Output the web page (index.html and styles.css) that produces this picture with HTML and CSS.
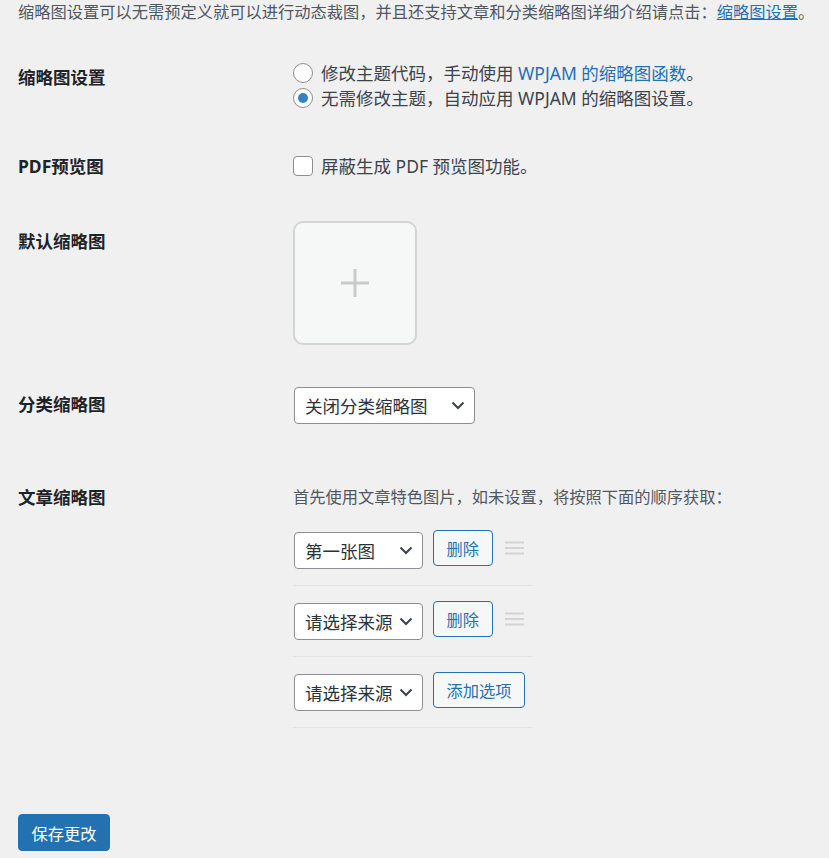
FILE: index.html
```html
<!DOCTYPE html>
<html lang="zh-CN">
<head>
  <meta charset="UTF-8" />
  <meta name="viewport" content="width=device-width, initial-scale=1.0"/>
  <title>缩略图设置</title>
  <link rel="stylesheet" href="styles.css">
</head>
<body>
  <div class="wrap">
    <p class="intro">缩略图设置可以无需预定义就可以进行动态裁图，并且还支持文章和分类缩略图详细介绍请点击：<a href="#" class="underline">缩略图设置</a>。</p>

    <div class="form-table">
      <div class="row row-thumb">
        <div class="row-label">缩略图设置</div>
        <div class="row-field">
          <label class="choice"><input type="radio" name="mode"><span>修改主题代码，手动使用 <a href="#">WPJAM 的缩略图函数</a>。</span></label>
          <label class="choice"><input type="radio" name="mode" checked><span>无需修改主题，自动应用 WPJAM 的缩略图设置。</span></label>
        </div>
      </div>

      <div class="row row-pdf">
        <div class="row-label">PDF预览图</div>
        <div class="row-field">
          <label class="choice"><input type="checkbox"><span>屏蔽生成 PDF 预览图功能。</span></label>
        </div>
      </div>

      <div class="row row-default">
        <div class="row-label">默认缩略图</div>
        <div class="row-field">
          <div class="upload-box">
            <svg width="30" height="30" viewBox="0 0 30 30"><path d="M15 1v28M1 15h28" stroke="#c9cacc" stroke-width="3"/></svg>
          </div>
        </div>
      </div>

      <div class="row row-term">
        <div class="row-label">分类缩略图</div>
        <div class="row-field">
          <span class="select-wrap">
            <select class="select-wide"><option>关闭分类缩略图</option></select>
            <svg class="chevron" width="14" height="9" viewBox="0 0 14 9"><path d="M1.5 1.5l5.5 5.5 5.5-5.5" fill="none" stroke="#3c434a" stroke-width="2"/></svg>
          </span>
        </div>
      </div>

      <div class="row row-post">
        <div class="row-label">文章缩略图</div>
        <div class="row-field">
          <p class="description">首先使用文章特色图片，如未设置，将按照下面的顺序获取：</p>
          <div class="source-list">
            <div class="source-item">
              <span class="select-wrap">
                <select class="select-small"><option>第一张图</option></select>
                <svg class="chevron" width="14" height="9" viewBox="0 0 14 9"><path d="M1.5 1.5l5.5 5.5 5.5-5.5" fill="none" stroke="#3c434a" stroke-width="2"/></svg>
              </span>
              <button class="button">删除</button>
              <span class="handle">
                <svg width="19" height="14" viewBox="0 0 19 14"><path d="M0 1.5h19M0 7h19M0 12.5h19" stroke="#d3d4d6" stroke-width="2.2"/></svg>
              </span>
            </div>
            <div class="source-item">
              <span class="select-wrap">
                <select class="select-small"><option>请选择来源</option></select>
                <svg class="chevron" width="14" height="9" viewBox="0 0 14 9"><path d="M1.5 1.5l5.5 5.5 5.5-5.5" fill="none" stroke="#3c434a" stroke-width="2"/></svg>
              </span>
              <button class="button">删除</button>
              <span class="handle">
                <svg width="19" height="14" viewBox="0 0 19 14"><path d="M0 1.5h19M0 7h19M0 12.5h19" stroke="#d3d4d6" stroke-width="2.2"/></svg>
              </span>
            </div>
            <div class="source-item">
              <span class="select-wrap">
                <select class="select-small"><option>请选择来源</option></select>
                <svg class="chevron" width="14" height="9" viewBox="0 0 14 9"><path d="M1.5 1.5l5.5 5.5 5.5-5.5" fill="none" stroke="#3c434a" stroke-width="2"/></svg>
              </span>
              <button class="button">添加选项</button>
            </div>
          </div>
        </div>
      </div>
    </div>

    <p class="submit"><button class="button-primary">保存更改</button></p>
  </div>
</body>
</html>
```

FILE: styles.css
```css
body {
  margin: 0;
  background: #f0f0f1;
  color: #3c434a;
  font-family: "Noto Sans", "Noto Sans CJK SC", sans-serif;
  font-size: 17.5px;
}

a {
  color: #2271b1;
  text-decoration: none;
}

a.underline {
  text-decoration: underline;
}

.wrap {
  padding-left: 18px;
}

.intro {
  margin: 0;
  padding-top: 2px;
  font-size: 16.25px;
  line-height: 20px;
  color: #50575e;
}

.form-table {
  margin-top: 19px;
}

.row {
  display: flex;
  align-items: flex-start;
}

.row-label {
  width: 275px;
  flex: 0 0 275px;
  padding-top: 25px;
  font-weight: 700;
  line-height: 22px;
  color: #1d2327;
}

.row-field {
  flex: 1;
}

.row-thumb .row-field {
  padding: 19px 0 20px;
}

.row-pdf .row-field {
  padding: 23px 0 27px;
}

.row-default .row-field {
  padding: 16px 0 23px;
}

.row-term .row-field {
  padding: 19px 0 37px;
}

.row-post .row-field {
  padding: 23.5px 0 20px;
}

.choice {
  display: flex;
  align-items: center;
  height: 25px;
  white-space: nowrap;
}

.choice input {
  appearance: none;
  -webkit-appearance: none;
  width: 20px;
  height: 20px;
  margin: 0 8px 0 0;
  border: 1px solid #8c8f94;
  background: #fff;
  box-sizing: border-box;
  display: flex;
  align-items: center;
  justify-content: center;
  flex: 0 0 20px;
}

.choice input[type="radio"] {
  border-radius: 50%;
}

.choice input[type="radio"]:checked::before {
  content: "";
  width: 10px;
  height: 10px;
  border-radius: 50%;
  background: #3582c4;
}

.choice input[type="checkbox"] {
  border-radius: 4px;
}

.upload-box {
  width: 124px;
  height: 124px;
  box-sizing: border-box;
  border: 2px solid #d3d4d6;
  border-radius: 10px;
  background: #f6f7f7;
  display: flex;
  align-items: center;
  justify-content: center;
}

.select-wrap {
  position: relative;
  display: inline-block;
  margin: 0 1px;
}

.select-wrap select {
  appearance: none;
  -webkit-appearance: none;
  height: 37px;
  box-sizing: border-box;
  border: 1px solid #8c8f94;
  border-radius: 4px;
  background: #fff;
  color: #2c3338;
  font-family: inherit;
  font-size: 17.5px;
  padding: 0 20px 0 10px;
  display: block;
}

.select-wide {
  width: 181px;
}

.select-small {
  width: 129px;
}

.chevron {
  position: absolute;
  right: 10px;
  top: 14px;
  pointer-events: none;
}

.description {
  margin: 0 0 5.5px;
  font-size: 16.25px;
  line-height: 25px;
  color: #50575e;
}

.source-list {
  width: 239px;
}

.source-item {
  display: flex;
  align-items: flex-start;
  gap: 9px;
  padding: 15px 0 16px;
  border-bottom: 1px solid #e2e3e4;
}

.source-item .select-wrap {
  margin-top: 2px;
}

.button {
  height: 36px;
  box-sizing: border-box;
  padding: 0 12.5px;
  border: 1px solid #2271b1;
  border-radius: 4px;
  background: #f6f7f7;
  color: #2271b1;
  font-family: inherit;
  font-size: 16.25px;
  cursor: pointer;
}

.handle {
  height: 36px;
  display: flex;
  align-items: center;
  margin-left: 3px;
}

.submit {
  margin: 0;
  padding-top: 66px;
}

.button-primary {
  height: 37px;
  padding: 0 12.5px;
  border: 1px solid #2271b1;
  border-radius: 4px;
  background: #2271b1;
  color: #fff;
  font-family: inherit;
  font-size: 16.25px;
  cursor: pointer;
}
```
